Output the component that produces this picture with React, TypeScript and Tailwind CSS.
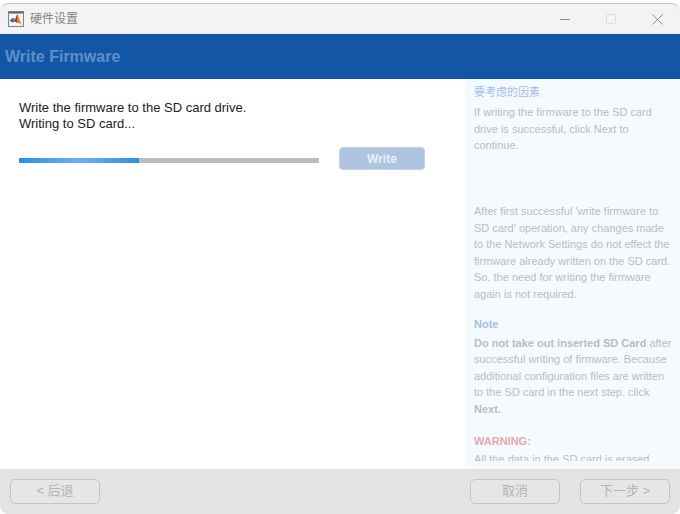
import React from "react";

const Mark = () => (
    <svg width="16" height="16" viewBox="0 0 16 16" className="shrink-0">
        <rect x="0.5" y="0.5" width="15" height="15" fill="#f6f6f6" stroke="#7d8188" />
        <rect x="1" y="1" width="14" height="1.5" fill="#4f6485" />
        <path d="M1.5 9.5 L5 6.8 L7 8.5 L4 11.5 Z" fill="#2f6fc0" />
        <path d="M4 11.5 L7 8.5 L9.2 3 L11 7.5 L9 12 L7.5 10.5 Z" fill="#b5301c" />
        <path d="M9.2 3 L11 7.5 L14 14 L11 12 L9 12 Z" fill="#e8872a" />
    </svg>
);

const FooterButton = ({ label }: { label: string }) => (
    <button className="w-[90px] h-[25px] rounded-[5px] border border-[#c4c4c4] bg-[#e6e6e6] text-[13px] text-[#b4b4b4] flex items-center justify-center">
        {label}
    </button>
);

export default function App() {
    return (
        <div className="w-[680px] h-[514px] flex flex-col bg-white overflow-hidden font-['Liberation_Sans','Noto_Sans_CJK_SC',sans-serif]">
            <div className="h-[31px] mt-[3px] shrink-0 rounded-t-[8px] border-t border-[#c4c4c4] bg-[#f3f3f3] flex items-center pl-2">
                <Mark />
                <span className="ml-[6px] text-[12px] text-[#858585]">硬件设置</span>
                <div className="ml-auto flex items-center gap-[36px] pr-[17px]">
                    <svg width="10" height="10" viewBox="0 0 10 10">
                        <path d="M0 5.5 H10" stroke="#8f8f8f" />
                    </svg>
                    <svg width="10" height="10" viewBox="0 0 10 10">
                        <rect x="0.5" y="0.5" width="9" height="9" rx="1" fill="none" stroke="#dddddd" />
                    </svg>
                    <svg width="11" height="11" viewBox="0 0 11 11">
                        <path d="M0.5 0.5 L10.5 10.5 M10.5 0.5 L0.5 10.5" stroke="#8a8a8a" />
                    </svg>
                </div>
            </div>
            <div className="h-[45px] shrink-0 bg-[#1356a6] flex items-center pl-[5px] text-[16px] font-bold text-[#5f8fca]">
                Write Firmware
            </div>
            <div className="flex-1 flex min-h-0">
                <div className="w-[465px] bg-white pl-[19px] pt-[21px]">
                    <p className="text-[13px] leading-[16px] text-[#222222]">
                        Write the firmware to the SD card drive.
                        <br />
                        Writing to SD card...
                    </p>
                    <div className="mt-[15px] flex items-start">
                        <div className="mt-[11px] w-[300px] h-[5px] bg-[#bdbdbd]">
                            <div className="w-[120px] h-full bg-gradient-to-r from-[#2a8fe4] via-[#6db0e8] to-[#2a8fe4]" />
                        </div>
                        <button className="ml-[20px] w-[86px] h-[23px] rounded-[4px] border border-[#c3d2e6] bg-[#aec4e1] text-[12px] font-bold text-[#e9eff7]">
                            Write
                        </button>
                    </div>
                </div>
                <div className="w-[215px] bg-[#f5faff] pl-[9px] pr-[5px] pt-[5px] text-[11px] leading-[16.5px] text-[#bcbcbc]">
                    <div className="h-[377px] overflow-hidden">
                        <p className="text-[#a3c0e6]">要考虑的因素</p>
                        <p className="mt-[3.5px]">If writing the firmware to the SD card drive is successful, click Next to continue.</p>
                        <p className="mt-[49.5px]">
                            After first successful 'write firmware to SD card' operation, any changes made to the Network Settings do not effect the firmware already written on the SD card. So, the need for writing the firmware again is not required.
                        </p>
                        <p className="mt-[13.5px] font-bold text-[#a3c0e6]">Note</p>
                        <p className="mt-[2.5px]">
                            <b>Do not take out inserted SD Card</b> after successful writing of firmware. Because additional configuration files are written to the SD card in the next step. click <b>Next.</b>
                        </p>
                        <p className="mt-[15.5px] font-bold text-[#e3a9ae]">WARNING:</p>
                        <p className="mt-[1.5px]">All the data in the SD card is erased</p>
                    </div>
                </div>
            </div>
            <div className="h-[45px] shrink-0 rounded-b-[8px] bg-[#e3e3e3] flex items-center pl-[10px] pr-[10px] pb-[1px]">
                <FooterButton label="< 后退" />
                <div className="ml-auto flex gap-[20px]">
                    <FooterButton label="取消" />
                    <FooterButton label="下一步 >" />
                </div>
            </div>
        </div>
    );
}
